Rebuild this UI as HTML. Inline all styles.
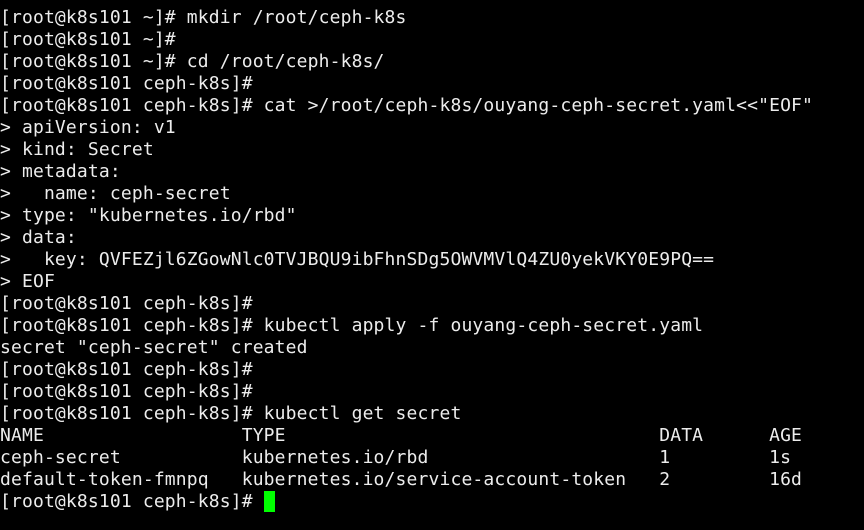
<!DOCTYPE html>
<html><head><meta charset="utf-8"><style>
html,body{margin:0;padding:0;background:#000;width:864px;height:530px;overflow:hidden}
pre{margin:0;position:absolute;left:0;top:7px;font-family:"DejaVu Sans Mono","Liberation Mono",monospace;font-size:18px;letter-spacing:0.15px;line-height:22px;color:#ececec;white-space:pre}
.c{display:inline-block;width:11px;height:21px;background:#00ff00;vertical-align:-5px}
</style></head><body>
<pre>[root@k8s101 ~]# mkdir /root/ceph-k8s
[root@k8s101 ~]#
[root@k8s101 ~]# cd /root/ceph-k8s/
[root@k8s101 ceph-k8s]#
[root@k8s101 ceph-k8s]# cat &gt;/root/ceph-k8s/ouyang-ceph-secret.yaml&lt;&lt;"EOF"
&gt; apiVersion: v1
&gt; kind: Secret
&gt; metadata:
&gt;   name: ceph-secret
&gt; type: "kubernetes.io/rbd"
&gt; data:
&gt;   key: QVFEZjl6ZGowNlc0TVJBQU9ibFhnSDg5OWVMVlQ4ZU0yekVKY0E9PQ==
&gt; EOF
[root@k8s101 ceph-k8s]#
[root@k8s101 ceph-k8s]# kubectl apply -f ouyang-ceph-secret.yaml
secret "ceph-secret" created
[root@k8s101 ceph-k8s]#
[root@k8s101 ceph-k8s]#
[root@k8s101 ceph-k8s]# kubectl get secret
NAME                  TYPE                                  DATA      AGE
ceph-secret           kubernetes.io/rbd                     1         1s
default-token-fmnpq   kubernetes.io/service-account-token   2         16d
[root@k8s101 ceph-k8s]# <span class="c"></span></pre>
</body></html>
